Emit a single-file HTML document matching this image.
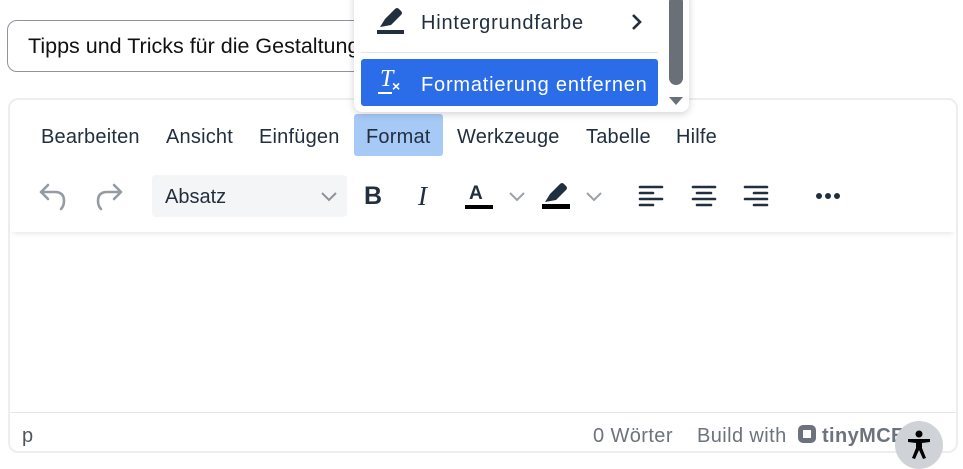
<!DOCTYPE html>
<html><head><meta charset="utf-8"><style>
*{box-sizing:border-box;margin:0;padding:0}
body{width:963px;height:469px;background:#fff;position:relative;overflow:hidden;font-family:"Liberation Sans",sans-serif;color:#222f3e}
.abs{position:absolute}
.input{left:7px;top:20px;width:420px;height:52px;border:1px solid #8f949c;border-radius:10px;font-size:21.5px;color:#111;padding:13px 0 0 20px;white-space:nowrap;overflow:hidden}
.editor{left:8px;top:98px;width:950px;height:355px;border:2px solid #eceef0;border-radius:10px}
.menu{font-size:20px;letter-spacing:.2px;color:#222f3e;top:126px}
.fmt{left:354px;top:114px;width:89px;height:42px;background:#a6c9f5;border-radius:3px}
.tbshadow{left:10px;top:216px;width:946px;height:16px;box-shadow:0 4px 6px -3px rgba(0,0,0,.12)}
.sel{left:152px;top:175px;width:195px;height:42px;background:#f4f5f6;border-radius:4px;font-size:20px;padding:11px 0 0 13px}
.status{left:10px;top:412px;width:946px;border-top:1px solid #e4e6e9}
.st{top:425px;font-size:20px;letter-spacing:.4px;color:#6c737d}
.dd{left:354px;top:-10px;width:335px;height:122px;background:#fff;border-radius:8px;box-shadow:0 2px 8px rgba(0,0,0,.18)}
.item{font-size:20px;letter-spacing:.8px}
</style></head><body>
<div class="abs input">Tipps und Tricks für die Gestaltung</div>
<div class="abs editor"></div>
<div class="abs fmt"></div>
<div class="abs menu" style="left:41px">Bearbeiten</div>
<div class="abs menu" style="left:166px">Ansicht</div>
<div class="abs menu" style="left:259px">Einfügen</div>
<div class="abs menu" style="left:366px">Format</div>
<div class="abs menu" style="left:457px">Werkzeuge</div>
<div class="abs menu" style="left:586px">Tabelle</div>
<div class="abs menu" style="left:676px">Hilfe</div>
<div class="abs tbshadow"></div>
<svg class="abs" style="left:36px;top:181px" width="90" height="32" fill="none" stroke="#959ba3" stroke-width="2.6" stroke-linecap="round" stroke-linejoin="round">
<path d="M12 4 L5 11 L12 18 M5 11 H19 Q28 11 28 20 Q28 25 25 28"/>
<path d="M78 4 L85 11 L78 18 M85 11 H71 Q62 11 62 20 Q62 25 65 28"/>
</svg>
<div class="abs sel">Absatz</div>
<svg class="abs" style="left:320px;top:190px" width="18" height="12" fill="none" stroke="#8d939b" stroke-width="2"><path d="M2 3 L9 10 L16 3"/></svg>
<div class="abs" style="left:364px;top:182px;font-size:25px;font-weight:bold">B</div>
<div class="abs" style="left:418px;top:181px;font-size:27px;font-family:'Liberation Serif',serif;font-style:italic">I</div>
<div class="abs" style="left:469px;top:183px;font-size:19px;font-weight:bold">A</div>
<div class="abs" style="left:465px;top:205px;width:28px;height:4px;background:#000"></div>
<svg class="abs" style="left:508px;top:190px" width="18" height="12" fill="none" stroke="#9ca1a8" stroke-width="2"><path d="M2 3 L9 10 L16 3"/></svg>
<svg class="abs" style="left:541px;top:183px" width="30" height="27"><path d="M4 19 L9 11 L19 1 Q21 -1 23 1 L25 3 Q27 5 25 7 L15 17 Z" fill="#222f3e"/><rect x="1" y="21" width="28" height="5" fill="#000"/></svg>
<svg class="abs" style="left:585px;top:190px" width="18" height="12" fill="none" stroke="#9ca1a8" stroke-width="2"><path d="M2 3 L9 10 L16 3"/></svg>
<svg class="abs" style="left:638px;top:185px" width="140" height="22" stroke="#222f3e" stroke-width="2.6" stroke-linecap="round">
<path d="M2 2H24M2 8H15M2 14H24M2 20H15"/>
<path d="M55 2H77M59 8H73M55 14H77M59 20H73"/>
<path d="M107 2H129M116 8H129M107 14H129M116 20H129"/>
</svg>
<svg class="abs" style="left:815px;top:191px" width="26" height="10" fill="#222f3e"><circle cx="4" cy="5" r="3"/><circle cx="13" cy="5" r="3"/><circle cx="22" cy="5" r="3"/></svg>
<div class="abs status"></div>
<div class="abs st" style="left:22px;color:#50565e">p</div>
<div class="abs st" style="left:593px">0 Wörter</div>
<div class="abs st" style="left:697px">Build with</div>
<svg class="abs" style="left:797px;top:424px" width="20" height="20"><rect x="1" y="1" width="18" height="18" rx="5" fill="#6c737d"/><rect x="6" y="6" width="8" height="8" fill="#fff"/></svg>
<div class="abs st" style="left:822px;font-weight:bold;color:#6c737d">tinyMCE</div>
<div class="abs" style="left:895px;top:421px;width:48px;height:48px;border-radius:50%;background:#cfd3d8"></div>
<svg class="abs" style="left:905px;top:430px" width="28" height="30" fill="#000"><circle cx="14" cy="4" r="3.5"/><path d="M3 9 L25 9 L25 12 L17 13 L17 18 L21 28 L18 29 L14 20 L10 29 L7 28 L11 18 L11 13 L3 12Z"/></svg>
<div class="abs dd"></div>
<svg class="abs" style="left:376px;top:8px" width="30" height="28"><path d="M4 19 L9 11 L19 1 Q21 -1 23 1 L25 3 Q27 5 25 7 L15 17 Z" fill="#222f3e"/><rect x="1" y="22" width="27" height="4" fill="#222f3e"/></svg>
<div class="abs item" style="left:421px;top:12px">Hintergrundfarbe</div>
<svg class="abs" style="left:631px;top:13px" width="12" height="18" fill="none" stroke="#222f3e" stroke-width="2.6"><path d="M2 2 L9 9 L2 16"/></svg>
<div class="abs" style="left:361px;top:52px;width:297px;height:1px;background:#e3e5e8"></div>
<div class="abs" style="left:361px;top:59px;width:297px;height:47px;background:#2b6de8;border-radius:3px"></div>
<div class="abs" style="left:380px;top:66px;font-size:24px;color:#fff;font-style:italic;font-family:'Liberation Serif',serif">T</div>
<div class="abs" style="left:378px;top:92px;width:14px;height:2px;background:#fff"></div>
<div class="abs" style="left:392px;top:78px;font-size:14px;color:#fff;font-weight:bold">×</div>
<div class="abs item" style="left:421px;top:74px;color:#fff">Formatierung entfernen</div>
<div class="abs" style="left:669px;top:-5px;width:14px;height:90px;background:#6b7078;border-radius:7px"></div>
<svg class="abs" style="left:668px;top:96px" width="16" height="10"><path d="M1 1 L15 1 L8 9Z" fill="#6b7078"/></svg>
</body></html>
